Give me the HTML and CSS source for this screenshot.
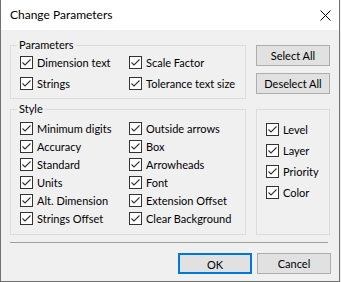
FILE: index.html
```html
<!DOCTYPE html>
<html>
<head>
<meta charset="utf-8">
<link rel="stylesheet" href="styles.css">
</head>
<body>
<div class="window">
  <div class="titlebar">
    <span class="title">Change Parameters</span>
    <svg class="close" width="11" height="11" viewBox="0 0 11 11"><path d="M0.5 0.5 L10.5 10.5 M10.5 0.5 L0.5 10.5" stroke="#000" stroke-width="1" fill="none"/></svg>
  </div>
  <div class="content">
    <div class="row top-row">
      <div class="group params">
        <span class="legend">Parameters</span>
        <div class="grid grid-params">
          <label class="check"><span class="box"><svg width="13" height="13" viewBox="0 0 13 13"><path d="M2.5 6.5 L5 9 L10.5 3.5" stroke="#333" stroke-width="1.1" fill="none"/></svg></span><span>Dimension text</span></label>
          <label class="check"><span class="box"><svg width="13" height="13" viewBox="0 0 13 13"><path d="M2.5 6.5 L5 9 L10.5 3.5" stroke="#333" stroke-width="1.1" fill="none"/></svg></span><span>Scale Factor</span></label>
          <label class="check"><span class="box"><svg width="13" height="13" viewBox="0 0 13 13"><path d="M2.5 6.5 L5 9 L10.5 3.5" stroke="#333" stroke-width="1.1" fill="none"/></svg></span><span>Strings</span></label>
          <label class="check"><span class="box"><svg width="13" height="13" viewBox="0 0 13 13"><path d="M2.5 6.5 L5 9 L10.5 3.5" stroke="#333" stroke-width="1.1" fill="none"/></svg></span><span>Tolerance text size</span></label>
        </div>
      </div>
      <div class="side-buttons">
        <button class="btn">Select All</button>
        <button class="btn">Deselect All</button>
      </div>
    </div>
    <div class="row mid-row">
      <div class="group style">
        <span class="legend">Style</span>
        <div class="grid grid-style">
          <label class="check"><span class="box"><svg width="13" height="13" viewBox="0 0 13 13"><path d="M2.5 6.5 L5 9 L10.5 3.5" stroke="#333" stroke-width="1.1" fill="none"/></svg></span><span>Minimum digits</span></label>
          <label class="check"><span class="box"><svg width="13" height="13" viewBox="0 0 13 13"><path d="M2.5 6.5 L5 9 L10.5 3.5" stroke="#333" stroke-width="1.1" fill="none"/></svg></span><span>Outside arrows</span></label>
          <label class="check"><span class="box"><svg width="13" height="13" viewBox="0 0 13 13"><path d="M2.5 6.5 L5 9 L10.5 3.5" stroke="#333" stroke-width="1.1" fill="none"/></svg></span><span>Accuracy</span></label>
          <label class="check"><span class="box"><svg width="13" height="13" viewBox="0 0 13 13"><path d="M2.5 6.5 L5 9 L10.5 3.5" stroke="#333" stroke-width="1.1" fill="none"/></svg></span><span>Box</span></label>
          <label class="check"><span class="box"><svg width="13" height="13" viewBox="0 0 13 13"><path d="M2.5 6.5 L5 9 L10.5 3.5" stroke="#333" stroke-width="1.1" fill="none"/></svg></span><span>Standard</span></label>
          <label class="check"><span class="box"><svg width="13" height="13" viewBox="0 0 13 13"><path d="M2.5 6.5 L5 9 L10.5 3.5" stroke="#333" stroke-width="1.1" fill="none"/></svg></span><span>Arrowheads</span></label>
          <label class="check"><span class="box"><svg width="13" height="13" viewBox="0 0 13 13"><path d="M2.5 6.5 L5 9 L10.5 3.5" stroke="#333" stroke-width="1.1" fill="none"/></svg></span><span>Units</span></label>
          <label class="check"><span class="box"><svg width="13" height="13" viewBox="0 0 13 13"><path d="M2.5 6.5 L5 9 L10.5 3.5" stroke="#333" stroke-width="1.1" fill="none"/></svg></span><span>Font</span></label>
          <label class="check"><span class="box"><svg width="13" height="13" viewBox="0 0 13 13"><path d="M2.5 6.5 L5 9 L10.5 3.5" stroke="#333" stroke-width="1.1" fill="none"/></svg></span><span>Alt. Dimension</span></label>
          <label class="check"><span class="box"><svg width="13" height="13" viewBox="0 0 13 13"><path d="M2.5 6.5 L5 9 L10.5 3.5" stroke="#333" stroke-width="1.1" fill="none"/></svg></span><span>Extension Offset</span></label>
          <label class="check"><span class="box"><svg width="13" height="13" viewBox="0 0 13 13"><path d="M2.5 6.5 L5 9 L10.5 3.5" stroke="#333" stroke-width="1.1" fill="none"/></svg></span><span>Strings Offset</span></label>
          <label class="check"><span class="box"><svg width="13" height="13" viewBox="0 0 13 13"><path d="M2.5 6.5 L5 9 L10.5 3.5" stroke="#333" stroke-width="1.1" fill="none"/></svg></span><span>Clear Background</span></label>
        </div>
      </div>
      <div class="group attrs">
        <div class="list">
          <label class="check"><span class="box"><svg width="13" height="13" viewBox="0 0 13 13"><path d="M2.5 6.5 L5 9 L10.5 3.5" stroke="#333" stroke-width="1.1" fill="none"/></svg></span><span>Level</span></label>
          <label class="check"><span class="box"><svg width="13" height="13" viewBox="0 0 13 13"><path d="M2.5 6.5 L5 9 L10.5 3.5" stroke="#333" stroke-width="1.1" fill="none"/></svg></span><span>Layer</span></label>
          <label class="check"><span class="box"><svg width="13" height="13" viewBox="0 0 13 13"><path d="M2.5 6.5 L5 9 L10.5 3.5" stroke="#333" stroke-width="1.1" fill="none"/></svg></span><span>Priority</span></label>
          <label class="check"><span class="box"><svg width="13" height="13" viewBox="0 0 13 13"><path d="M2.5 6.5 L5 9 L10.5 3.5" stroke="#333" stroke-width="1.1" fill="none"/></svg></span><span>Color</span></label>
        </div>
      </div>
    </div>
    <div class="separator"></div>
    <div class="row footer">
      <button class="btn btn-default">OK</button>
      <button class="btn">Cancel</button>
    </div>
  </div>
</div>
</body>
</html>
```

FILE: styles.css
```css
* { box-sizing: border-box; }
html, body { margin: 0; padding: 0; background: #f0f0f0; }
body { font-family: Lato, "Noto Sans", sans-serif; font-size: 11px; color: #000; }

.window {
  width: 340px;
  height: 282px;
  border-left: 1px solid #707070;
  border-right: 1px solid #707070;
  border-bottom: 1px solid #707070;
  background: #f0f0f0;
  display: flex;
  flex-direction: column;
}

.titlebar {
  height: 30px;
  background: #fff;
  display: flex;
  align-items: center;
  justify-content: space-between;
  padding: 0 8px 0 9px;
}
.title { font-size: 12px; line-height: 30px; }
.close { display: block; margin-top: 1px; }

.content { padding: 15px 0 0 9px; }

.row { display: flex; }
.top-row { gap: 10px; }
.mid-row { gap: 10px; margin-top: 10px; }

.group {
  position: relative;
  border: 1px solid #dcdcdc;
}
.legend {
  position: absolute;
  top: -8px;
  left: 6px;
  padding: 0 2px;
  background: #f0f0f0;
  line-height: 13px;
}

.params { width: 236px; height: 54px; padding: 10px 0 0 9px; }
.style { width: 236px; height: 126px; padding: 12px 0 0 9px; }
.attrs { width: 74px; height: 126px; padding: 13px 0 0 9px; }

.grid { display: grid; grid-template-columns: 109px 1fr; }
.grid-params { row-gap: 8px; }
.grid-style { row-gap: 5px; }
.list { display: flex; flex-direction: column; gap: 8px; }

.check {
  display: flex;
  align-items: center;
  height: 13px;
  line-height: 13px;
  gap: 4px;
  white-space: nowrap;
}
.box {
  width: 13px;
  height: 13px;
  border: 1px solid #333;
  background: #fff;
  flex: none;
  position: relative;
}
.box svg { position: absolute; left: -1px; top: -1px; }

.side-buttons { display: flex; flex-direction: column; gap: 7px; }
.btn {
  font: inherit;
  color: #000;
  width: 74px;
  height: 21px;
  padding: 0;
  background: #e1e1e1;
  border: 1px solid #adadad;
  border-radius: 0;
  line-height: 19px;
}
.btn-default { border: 2px solid #0078d7; }

.separator {
  width: 318px;
  height: 1px;
  background: #a0a0a0;
  margin-top: 7px;
}
.footer { justify-content: flex-start; gap: 5px; margin-top: 10px; padding-left: 168px; }
```
